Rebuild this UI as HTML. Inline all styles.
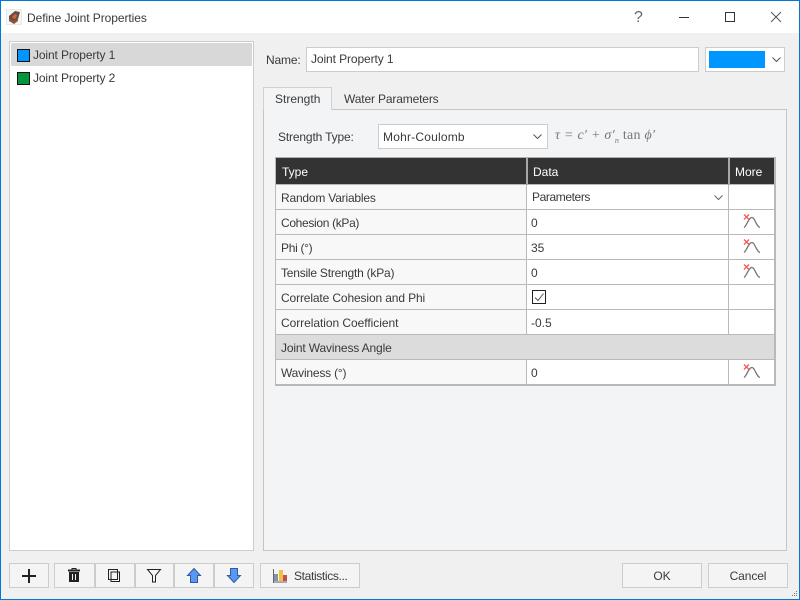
<!DOCTYPE html>
<html><head><meta charset="utf-8"><style>
html,body{margin:0;padding:0;width:800px;height:600px;overflow:hidden}
body{position:relative;background:#f0f0f0;font:12px "Liberation Sans",sans-serif;color:#3a3a3a}
div{position:absolute;box-sizing:border-box;white-space:nowrap}
svg{position:absolute;overflow:visible}
.t{line-height:16px;height:16px}
.btn{background:#f4f4f4;border:1px solid #ccc;height:25px;top:563px}
.line{background:#b9b9b9}
.wh{background:#fff}
</style></head><body>
<div style="left:0;top:0;width:800px;height:33px;background:#fff"></div>
<svg style="left:6px;top:9px" width="16" height="16" viewBox="0 0 16 16"><rect x="0.5" y="0.5" width="15" height="15" fill="#f7f7f7" stroke="#e8e8e8"/><path d="M3 7L9 2l5 1-2 7-4 3-5-3z" fill="#5f5048"/><path d="M6 8l3-3 2 1-1 3-2 1z" fill="#e0602a"/><path d="M3 10l5 3 4-3v2l-4 3-5-3z" fill="#a04a2a"/></svg>
<div class="t" style="left:27px;top:10px;letter-spacing:-.07px">Define Joint Properties</div>
<div class="t" style="left:634px;top:10px;font-size:16px;color:#666">?</div>
<div style="left:679px;top:17px;width:10px;height:1px;background:#333"></div>
<div style="left:725px;top:12px;width:10px;height:10px;border:1px solid #333"></div>
<svg style="left:771px;top:12px" width="10" height="10"><path d="M0 0L10 10M10 0L0 10" stroke="#555" stroke-width="1"/></svg>

<div class="wh" style="left:9px;top:41px;width:245px;height:510px;border:1px solid #ccc"></div>
<div style="left:11px;top:43px;width:241px;height:23px;background:#d8d8d8"></div>
<div style="left:17px;top:49px;width:13px;height:13px;background:#0096ff;border:1px solid #111"></div>
<div style="left:17px;top:72px;width:13px;height:13px;background:#00963c;border:1px solid #111"></div>
<div class="t" style="left:33px;top:47px;letter-spacing:-.12px">Joint Property 1</div>
<div class="t" style="left:33px;top:70px;letter-spacing:-.12px">Joint Property 2</div>

<div class="t" style="left:266px;top:52px;letter-spacing:-.15px">Name:</div>
<div class="wh" style="left:306px;top:47px;width:393px;height:25px;border:1px solid #ccc"></div>
<div class="t" style="left:311px;top:51px;letter-spacing:-.1px">Joint Property 1</div>
<div class="wh" style="left:705px;top:47px;width:80px;height:25px;border:1px solid #ccc"></div>
<div style="left:709px;top:51px;width:56px;height:17px;background:#0096ff"></div>
<svg style="left:772px;top:57px" width="9" height="6"><path d="M.5 .5L4.5 4.5L8.5 .5" fill="none" stroke="#555"/></svg>

<div style="left:263px;top:109px;width:524px;height:442px;background:#f3f4f6;border:1px solid #c4c4c4"></div>
<div style="left:263px;top:87px;width:69px;height:23px;background:#f3f4f6;border:1px solid #d0d0d0;border-bottom:0"></div>
<div class="t" style="left:275px;top:91px">Strength</div>
<div class="t" style="left:344px;top:91px;letter-spacing:-.15px">Water Parameters</div>

<div class="t" style="left:278px;top:129px;letter-spacing:-.15px">Strength Type:</div>
<div class="wh" style="left:378px;top:124px;width:170px;height:25px;border:1px solid #ccc"></div>
<div class="t" style="left:383px;top:129px;letter-spacing:.2px">Mohr-Coulomb</div>
<svg style="left:533px;top:134px" width="9" height="6"><path d="M.5 .5L4.5 4.5L8.5 .5" fill="none" stroke="#555"/></svg>
<div class="t" style="left:555px;top:128px;font:italic 14px 'Liberation Serif',serif;color:#777;line-height:16px;letter-spacing:.25px">τ = c′ + σ′<sub style="font-size:8px;line-height:0">n</sub> <span style="font-style:normal">tan</span> ϕ′</div>

<!-- table -->
<div class="wh" style="left:275px;top:157px;width:501px;height:229px"></div>
<div style="left:276px;top:185px;width:251px;height:200px;background:#f8f8f8"></div>
<div style="left:275px;top:157px;width:501px;height:28px;background:#333;border:1px solid #b0b0b0;border-bottom:1px solid #b9b9b9"></div>
<div style="left:276px;top:335px;width:499px;height:24px;background:#dcdcdc"></div>
<div class="line" style="left:275px;top:157px;width:1px;height:229px"></div>
<div class="line" style="left:774px;top:157px;width:2px;height:229px"></div>
<div class="line" style="left:275px;top:384px;width:501px;height:2px"></div>
<div class="line" style="left:276px;top:209px;width:499px;height:1px"></div>
<div class="line" style="left:276px;top:234px;width:499px;height:1px"></div>
<div class="line" style="left:276px;top:259px;width:499px;height:1px"></div>
<div class="line" style="left:276px;top:284px;width:499px;height:1px"></div>
<div class="line" style="left:276px;top:309px;width:499px;height:1px"></div>
<div class="line" style="left:276px;top:334px;width:499px;height:1px"></div>
<div class="line" style="left:276px;top:359px;width:499px;height:1px"></div>
<div class="line" style="left:526px;top:158px;width:2px;height:27px;background:#a8a8a8"></div>
<div class="line" style="left:728px;top:158px;width:2px;height:27px;background:#a8a8a8"></div>
<div class="line" style="left:526px;top:185px;width:1px;height:150px"></div>
<div class="line" style="left:728px;top:185px;width:1px;height:150px"></div>
<div class="line" style="left:526px;top:360px;width:1px;height:25px"></div>
<div class="line" style="left:728px;top:360px;width:1px;height:25px"></div>

<div class="t" style="left:282px;top:164px;color:#fff">Type</div>
<div class="t" style="left:533px;top:164px;color:#fff">Data</div>
<div class="t" style="left:735px;top:164px;color:#fff">More</div>

<div class="t" style="left:281px;top:190px;letter-spacing:-.2px">Random Variables</div>
<div class="t" style="left:281px;top:215px;letter-spacing:-.33px">Cohesion (kPa)</div>
<div class="t" style="left:281px;top:240px;letter-spacing:-.3px">Phi (°)</div>
<div class="t" style="left:281px;top:265px;letter-spacing:-.22px">Tensile Strength (kPa)</div>
<div class="t" style="left:281px;top:290px;letter-spacing:-.13px">Correlate Cohesion and Phi</div>
<div class="t" style="left:281px;top:315px;letter-spacing:-.05px">Correlation Coefficient</div>
<div class="t" style="left:281px;top:340px;letter-spacing:-.15px">Joint Waviness Angle</div>
<div class="t" style="left:281px;top:365px;letter-spacing:-.2px">Waviness (°)</div>

<div class="t" style="left:532px;top:189px;letter-spacing:-.4px">Parameters</div>
<svg style="left:714px;top:195px" width="9" height="5"><path d="M.5 .5L4.5 4.5L8.5 .5" fill="none" stroke="#666"/></svg>
<div class="t" style="left:531px;top:215px">0</div>
<div class="t" style="left:531px;top:240px">35</div>
<div class="t" style="left:531px;top:265px">0</div>
<div style="left:532px;top:290px;width:14px;height:14px;border:1px solid #222;background:#fff"></div>
<svg style="left:532px;top:290px" width="14" height="14"><path d="M3 7.500L6 10.500L11.500 3.500" fill="none" stroke="#555"/></svg>
<div class="t" style="left:531px;top:315px">-0.5</div>
<div class="t" style="left:531px;top:365px">0</div>

<svg style="left:743px;top:214px" width="20" height="16"><path d="M1 13.500C4 11.500 5.500 3.500 9 3.500C12 3.500 13 12.500 17 13.500" fill="none" stroke="#777" stroke-width="1.300"/><path d="M1 .5L6 5.500M6 .5L1 5.500" stroke="#f55" stroke-width="1.300"/></svg>
<svg style="left:743px;top:239px" width="20" height="16"><path d="M1 13.500C4 11.500 5.500 3.500 9 3.500C12 3.500 13 12.500 17 13.500" fill="none" stroke="#777" stroke-width="1.300"/><path d="M1 .5L6 5.500M6 .5L1 5.500" stroke="#f55" stroke-width="1.300"/></svg>
<svg style="left:743px;top:264px" width="20" height="16"><path d="M1 13.500C4 11.500 5.500 3.500 9 3.500C12 3.500 13 12.500 17 13.500" fill="none" stroke="#777" stroke-width="1.300"/><path d="M1 .5L6 5.500M6 .5L1 5.500" stroke="#f55" stroke-width="1.300"/></svg>
<svg style="left:743px;top:364px" width="20" height="16"><path d="M1 13.500C4 11.500 5.500 3.500 9 3.500C12 3.500 13 12.500 17 13.500" fill="none" stroke="#777" stroke-width="1.300"/><path d="M1 .5L6 5.500M6 .5L1 5.500" stroke="#f55" stroke-width="1.300"/></svg>

<!-- bottom buttons -->
<div class="btn" style="left:9px;width:40px"></div>
<svg style="left:22px;top:569px" width="14" height="14"><path d="M7 0V14M0 7H14" stroke="#222" stroke-width="2"/></svg>
<div class="btn" style="left:54px;width:41px"></div>
<svg style="left:68px;top:568px" width="12" height="14"><path d="M0 2.500H12" stroke="#222" stroke-width="2"/><path d="M4 2V.5H8V2" fill="none" stroke="#222"/><path d="M1 4H11V14H1Z" fill="#222"/><path d="M4.500 6V12M7.500 6V12" stroke="#f4f4f4"/></svg>
<div class="btn" style="left:95px;width:40px"></div>
<svg style="left:108px;top:569px" width="13" height="14"><path d="M.5 .5H9.500V10.500H.5ZM3 3H11.500V12.500H3Z" fill="none" stroke="#222"/><path d="M3 10.500H9.500V3" fill="none" stroke="#222"/></svg>
<div class="btn" style="left:135px;width:39px"></div>
<svg style="left:147px;top:569px" width="15" height="14"><path d="M.5 .5H13.500L8.500 6.500V13H5.500V6.500Z" fill="none" stroke="#222"/></svg>
<div class="btn" style="left:174px;width:40px"></div>
<svg style="left:187px;top:568px" width="15" height="15"><path d="M7 .5L13.500 7.500H10.500V14.500H3.500V7.500H.5Z" fill="#5b96f0" stroke="#2f5aa8"/></svg>
<div class="btn" style="left:214px;width:40px"></div>
<svg style="left:227px;top:568px" width="15" height="15"><path d="M3.500 .5H10.500V7.500H13.500L7 14.500L.5 7.500H3.500Z" fill="#5b96f0" stroke="#2f5aa8"/></svg>
<div class="btn" style="left:260px;width:100px"></div>
<svg style="left:273px;top:569px" width="15" height="15"><rect x="1" y="5" width="4" height="8" fill="#8494aa"/><rect x="6" y="1" width="4" height="12" fill="#f0c040"/><rect x="10" y="6" width="4" height="7" fill="#c0504d"/><rect x="0" y="12" width="14" height="2" fill="#aaa"/><path d="M.5 0V14" stroke="#666"/></svg>
<div class="t" style="left:294px;top:568px;letter-spacing:-.35px">Statistics...</div>
<div class="btn" style="left:622px;width:80px;text-align:center;line-height:25px">OK</div>
<div class="btn" style="left:708px;width:80px;text-align:center;line-height:25px;letter-spacing:-.1px">Cancel</div>

<!-- size grip -->
<svg style="left:790px;top:590px" width="8" height="8"><path d="M6 1h1v1H6zM4 3h1v1H4zM6 3h1v1H6zM2 5h1v1H2zM4 5h1v1H4zM6 5h1v1H6z" fill="#777"/></svg>

<!-- window frame -->
<div style="left:0;top:0;width:800px;height:600px;border:1px solid #0078d7"></div>
</body></html>
